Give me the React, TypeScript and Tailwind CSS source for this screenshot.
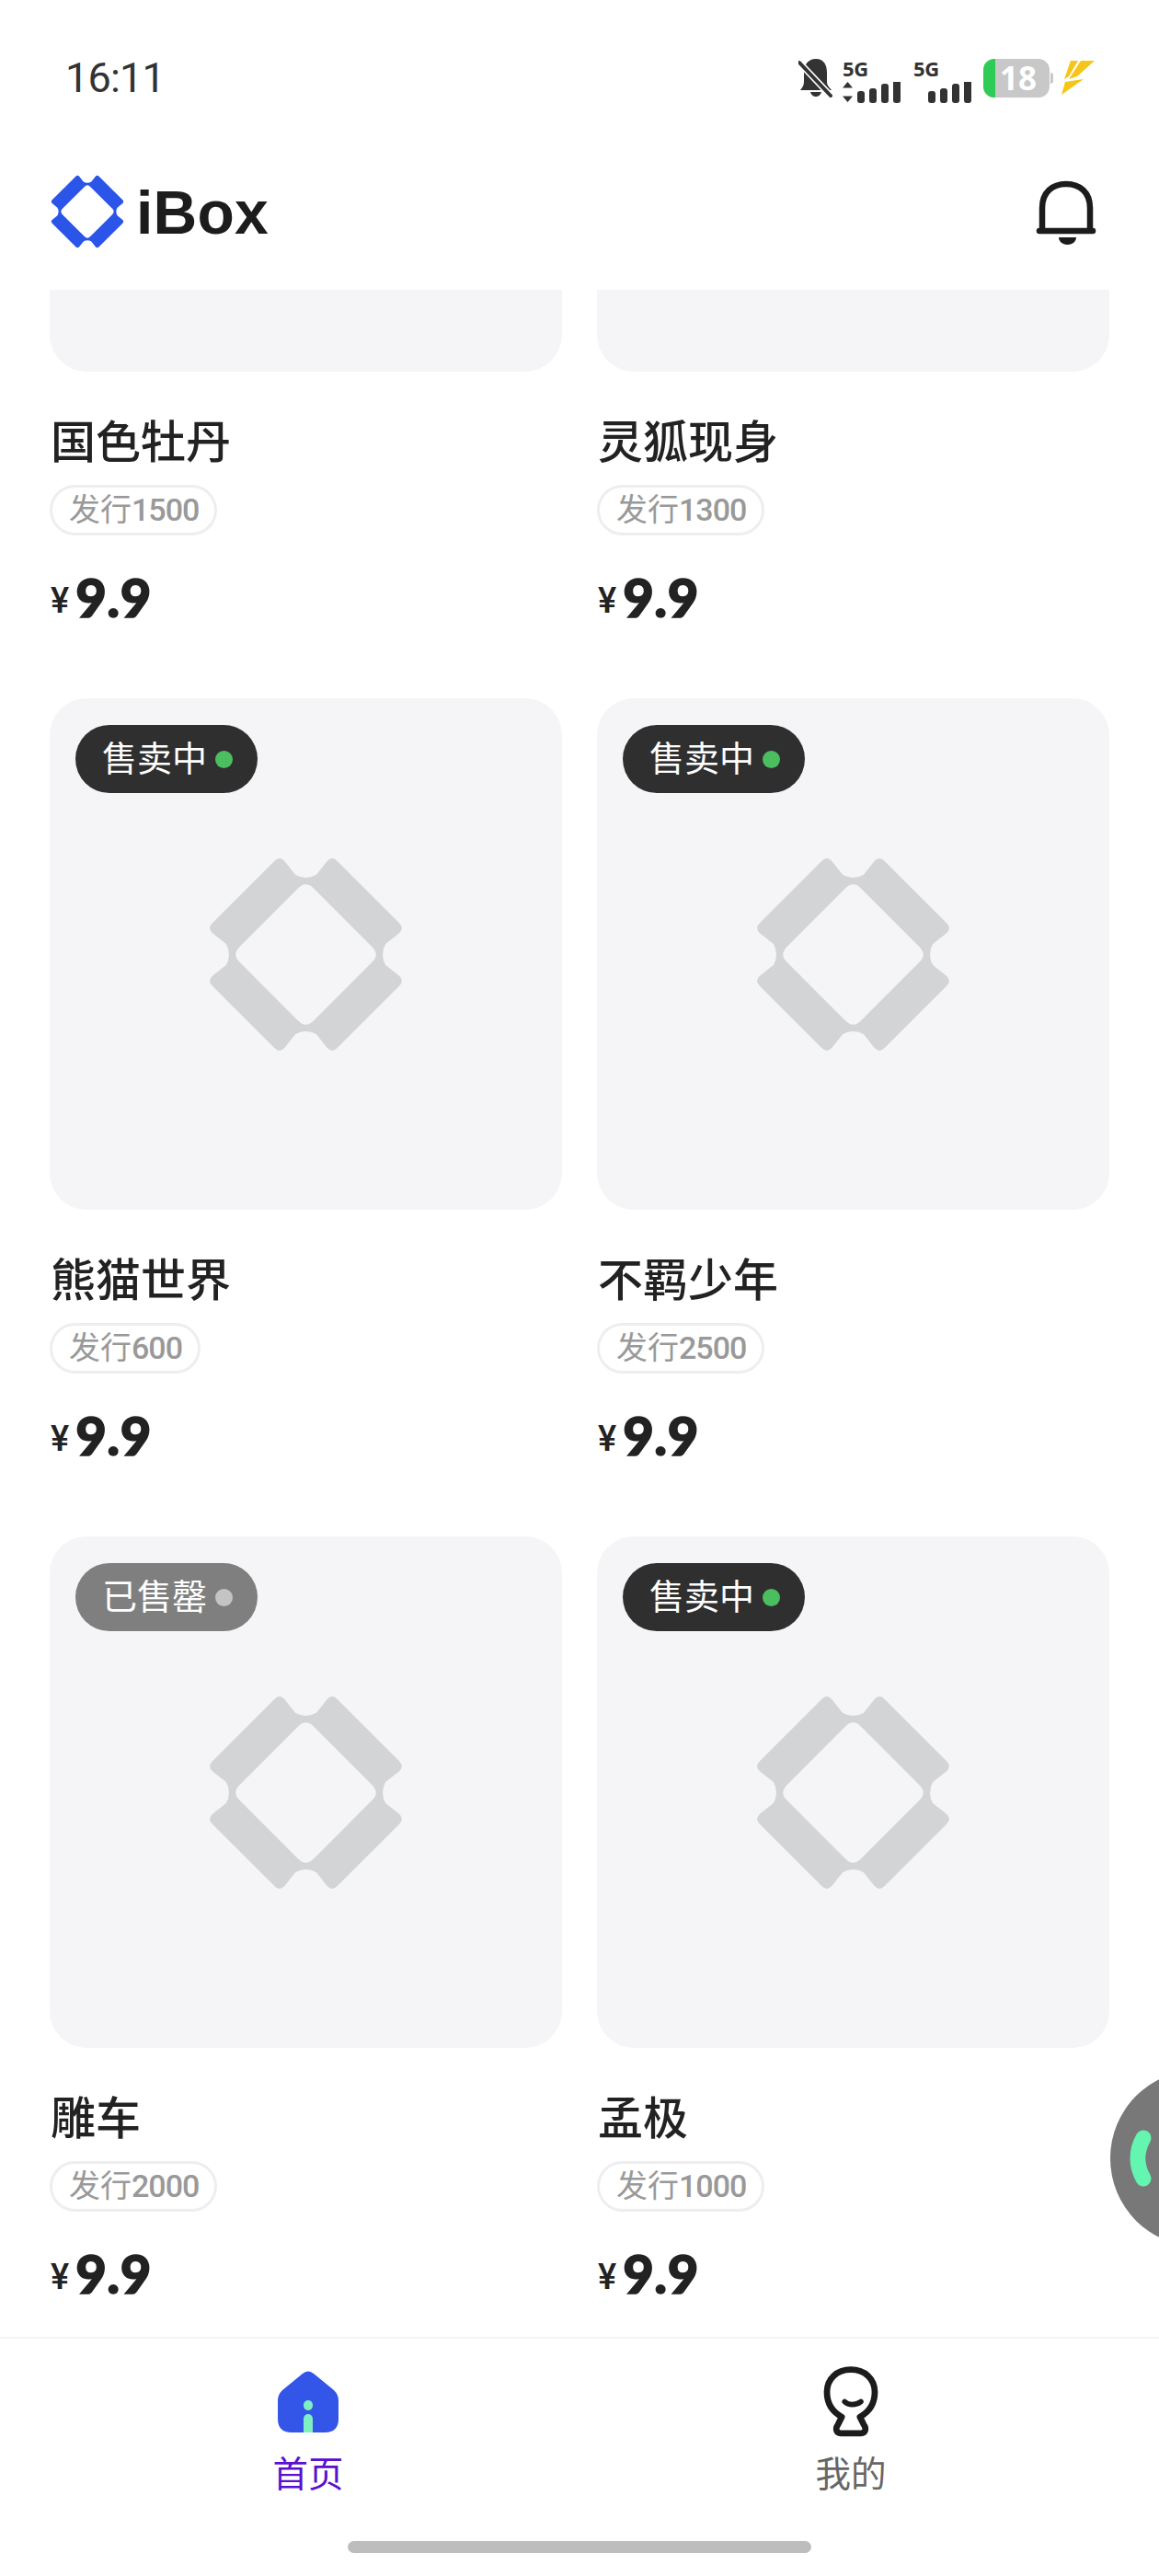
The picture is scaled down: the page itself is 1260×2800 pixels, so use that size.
const CJK = "font-['Roboto','Noto_Sans_CJK_SC',sans-serif]";

const RING =
  "M0,-40 Q3,-40 5.5,-41.5 L11,-48.5 Q13.7,-51.5 16.5,-48.5 L48.5,-16.5 Q51.5,-13.7 48.5,-11 L41.5,-5.5 Q40,-3 40,0 Q40,3 41.5,5.5 L48.5,11 Q51.5,13.7 48.5,16.5 L16.5,48.5 Q13.7,51.5 11,48.5 L5.5,41.5 Q3,40 0,40 Q-3,40 -5.5,41.5 L-11,48.5 Q-13.7,51.5 -16.5,48.5 L-48.5,16.5 Q-51.5,13.7 -48.5,11 L-41.5,5.5 Q-40,3 -40,0 Q-40,-3 -41.5,-5.5 L-48.5,-11 Q-51.5,-13.7 -48.5,-16.5 L-16.5,-48.5 Q-13.7,-51.5 -11,-48.5 L-5.5,-41.5 Q-3,-40 0,-40Z M-4,-34.5 Q0,-38.5 4,-34.5 L34.5,-4 Q38.5,0 34.5,4 L4,34.5 Q0,38.5 -4,34.5 L-34.5,4 Q-38.5,0 -34.5,-4Z";

function Ring({ size, color }: { size: number; color: string }) {
  return (
    <svg width={size} height={size} viewBox="-51 -51 102 102" className="block shrink-0">
      <path d={RING} fill={color} fillRule="evenodd" />
    </svg>
  );
}

function Signal({ arrows }: { arrows?: boolean }) {
  return (
    <div className="flex flex-col w-[64px]">
      <div className="h-[26px] text-[22px] leading-[22px] font-bold text-[#333] font-['Open_Sans',sans-serif] tracking-[-0.3px]">5G</div>
      <svg width="64" height="24" viewBox="0 0 64 24" className="block">
        {arrows && <path d="M5.5 0 L11 6.5 H0 Z M5.5 22 L11 15.5 H0 Z" fill="#333" />}
        <rect x="16" y="10" width="8" height="13" rx="3" fill="#333" />
        <rect x="29" y="7" width="8" height="16" rx="3" fill="#333" />
        <rect x="42" y="2" width="8" height="21" rx="3" fill="#333" />
        <rect x="55" y="-4" width="8" height="27" rx="3" fill="#333" />
      </svg>
    </div>
  );
}

function StatusBar() {
  return (
    <div className="h-[90px] flex items-start justify-between pl-[71px] pr-[70px]">
      <div className="mt-[54px] text-[45px] leading-[62px] text-[#333] font-['Roboto',sans-serif] tracking-[-0.8px]">16:11</div>
      <div className="mt-[63px] flex items-start">
        <svg width="38" height="44" viewBox="0 0 38 44" className="block mr-[10px]">
          <path d="M19 1 C28 1 31 8 31 16 V26 C31 30 34 32 36 35 H2 C4 32 6 30 6 26 V16 C6 8 10 1 19 1Z M13 37 H25 C24 41 21 42 19 42 C17 42 14 41 13 37Z" fill="#333" />
          <path d="M1 5 L35 41" stroke="#fff" strokeWidth="7" />
          <path d="M1 5 L35 41" stroke="#333" strokeWidth="4" strokeLinecap="round" />
        </svg>
        <Signal arrows />
        <div className="w-[13px]" />
        <Signal />
        <div className="relative ml-[12px] mt-[1px] flex w-[72px] h-[42px] items-center rounded-[12px] bg-[#c8c8c8]">
          <div className="absolute left-0 top-0 bottom-0 w-[13px] rounded-l-[12px] bg-[#2ecc55]" />
          <div className="relative pl-[18px] text-[35px] leading-[42px] font-bold text-white font-['Open_Sans',sans-serif]">18</div>
        </div>
        <div className="ml-[1px] mt-[16px] w-[3px] h-[12px] rounded-r-[3px] bg-[#c8c8c8]" />
        <svg width="36" height="38" viewBox="0 0 36 38" className="block ml-[9px] mt-[3px]">
          <path d="M10 0 H18 L8 17 L3 20 Z" fill="#f5c518" />
          <path d="M21 0 H36 L17 17 L8 20 Z" fill="#f5c518" />
          <path d="M4 23 L24 20 L0 37 Z" fill="#f5c518" />
        </svg>
      </div>
    </div>
  );
}

function Header() {
  return (
    <div className="h-[225px] flex items-center justify-between pl-[55px] pr-[60px] pt-[70px] pb-[15px]">
      <div className="flex items-center gap-[13px]">
        <Ring size={80} color="#2b54e8" />
        <div className="text-[66px] leading-[80px] font-bold text-[#1c1c1c] font-['Liberation_Sans',sans-serif] tracking-[0.2px] mt-[2px]">iBox</div>
      </div>
      <svg width="90" height="90" viewBox="0 0 90 90" className="block">
        <path d="M23 66 V41 C23 24 34 15 49 15 C64 15 75 24 75 41 V66" fill="none" stroke="#1c1c1c" strokeWidth="6.5" />
        <path d="M20 66 H78" stroke="#1c1c1c" strokeWidth="6.5" strokeLinecap="round" />
        <path d="M41 73 H60 C60 78 55 81 50.5 81 C46 81 41 78 41 73Z" fill="#1c1c1c" />
      </svg>
    </div>
  );
}

function Pill({ sold }: { sold?: boolean }) {
  return (
    <div
      className={`absolute left-[28px] top-[29px] flex h-[74px] w-[198px] items-center rounded-full pl-[29px] ${
        sold ? "bg-[#7f7f7f]" : "bg-[#2f2f2f]"
      }`}
    >
      <span className={`text-[38px] leading-[74px] text-white ${CJK}`}>{sold ? "已售罄" : "售卖中"}</span>
      <span className={`ml-[9px] h-[19px] w-[19px] rounded-full ${sold ? "bg-[#c4c4c4]" : "bg-[#4bbf5f]"}`} />
    </div>
  );
}

function Product({ name, count, sold, clipped }: { name: string; count: number; sold?: boolean; clipped?: boolean }) {
  return (
    <div>
      {clipped ? (
        <div className="h-[89px] rounded-b-[40px] bg-[#f5f5f7]" />
      ) : (
        <div className="relative flex h-[556px] items-center justify-center rounded-[40px] bg-[#f5f5f7]">
          <Pill sold={sold} />
          <Ring size={213} color="#d3d4d6" />
        </div>
      )}
      <div className={`mt-[44px] h-[68px] pl-[1px] text-[49px] font-medium leading-[68px] text-[#222] ${CJK}`}>{name}</div>
      <div className="mt-[11px] flex">
        <div className={`flex h-[55px] items-center rounded-full border-[3px] border-[#eeeeee] pl-[18px] pr-[17px] text-[34px] text-[#999999] ${CJK}`}>
          发行<span className="font-medium tracking-[-1px]">{count}</span>
        </div>
      </div>
      <div className="mt-[30px] flex h-[74px] items-center pl-[1px] text-[#222]">
        <span className={`mt-[7px] text-[38px] font-medium leading-[74px] ${CJK}`}>¥</span>
        <span className="ml-[7px] text-[58px] font-black leading-[74px] font-['Lato',sans-serif] [-webkit-text-stroke:1.5px_#222] tracking-[0.5px]">9.9</span>
      </div>
    </div>
  );
}

function TabBar() {
  return (
    <div className="h-[260px] border-t-[2px] border-[#f5f5f5] bg-white">
      <div className="flex px-[40px] pt-[30px]">
        <div className="flex flex-1 flex-col items-center">
          <svg width="68" height="78" viewBox="0 0 68 78" className="block">
            <path d="M28 8 Q34 3 40 8 L62 26 Q67 31 67 37 V57 Q67 72 52 72 H16 Q1 72 1 57 V37 Q1 31 6 26 Z" fill="#3355e8" />
            <rect x="29" y="37" width="10" height="11" rx="5" fill="#7ff0c0" />
            <path d="M29 72 V57 A5 5 0 0 1 39 57 V72 Z" fill="#7ff0c0" />
          </svg>
          <div className={`mt-[15px] text-[38.5px] leading-[50px] text-[#5b0fd0] ${CJK}`}>首页</div>
        </div>
        <div className="flex flex-1 flex-col items-center">
          <svg width="78" height="78" viewBox="3 7 75 75" className="block">
            <path
              d="M31 60 C20 54 15.5 45 15.5 34 C15.5 20 26 10.5 40.5 10.5 C55 10.5 65.5 20 65.5 34 C65.5 45 61 54 50 60 L54 68 C57 72 56 77 51 77 H30 C25 77 24 72 27 68 Z"
              fill="none"
              stroke="#1c1c1c"
              strokeWidth="6.5"
              strokeLinejoin="round"
            />
            <path d="M34 44 C38 48 46 48 51 44" fill="none" stroke="#1c1c1c" strokeWidth="5.5" strokeLinecap="round" />
          </svg>
          <div className={`mt-[15px] text-[38.5px] leading-[50px] text-[#666666] ${CJK}`}>我的</div>
        </div>
      </div>
      <div className="mx-auto mt-[47px] h-[13px] w-[504px] rounded-full bg-[#bdbdbd]" />
    </div>
  );
}

export default function App() {
  return (
    <div className="relative flex h-[2800px] w-[1260px] flex-col overflow-hidden bg-white">
      <StatusBar />
      <Header />
      <div className="h-[2225px] overflow-hidden">
        <div className="grid grid-cols-[557px_557px] gap-x-[38px] gap-y-[73px] px-[54px]">
          <Product clipped name="国色牡丹" count={1500} />
          <Product clipped name="灵狐现身" count={1300} />
          <Product name="熊猫世界" count={600} />
          <Product name="不羁少年" count={2500} />
          <Product sold name="雕车" count={2000} />
          <Product name="孟极" count={1000} />
        </div>
      </div>
      <TabBar />
      <div className="absolute left-[1207px] top-[2250px] h-[192px] w-[192px] rounded-full bg-[#787878]">
        <svg width="40" height="80" viewBox="0 0 40 80" className="absolute left-[12px] top-[60px]">
          <path d="M24 14 C16 28 16 44 24 58" fill="none" stroke="#64f5b0" strokeWidth="17" strokeLinecap="round" />
        </svg>
      </div>
    </div>
  );
}
